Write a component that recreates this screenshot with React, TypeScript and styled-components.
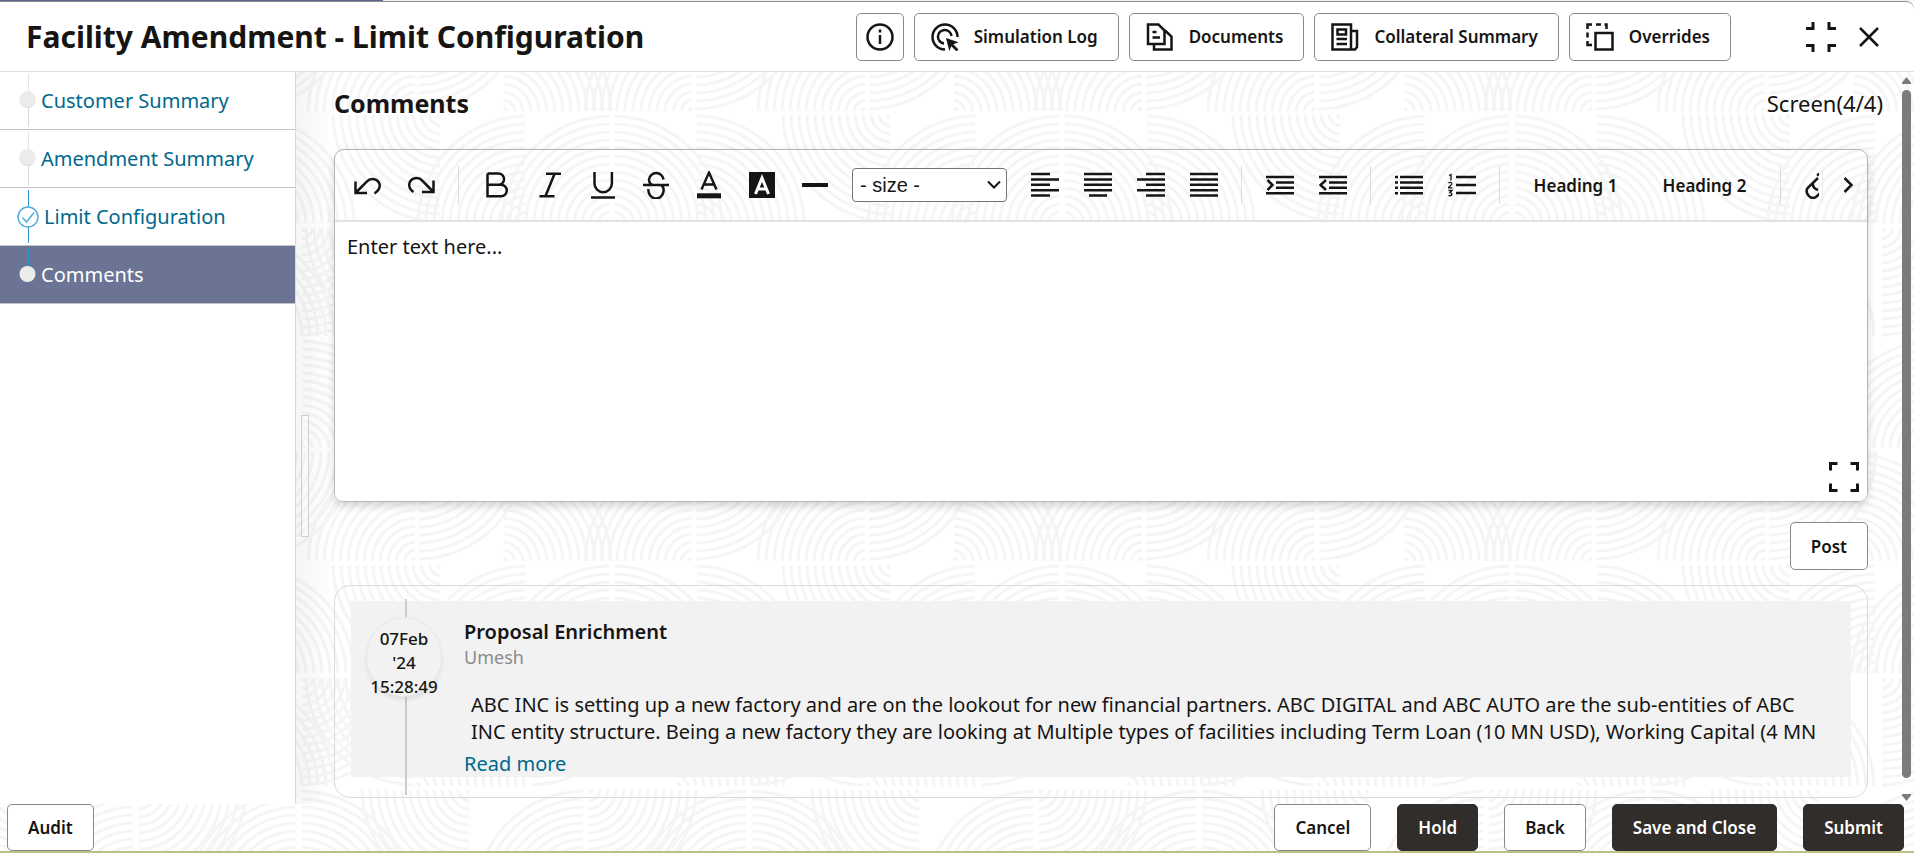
import React from "react";
import styled, { createGlobalStyle, css } from "styled-components";

/* ---------- Background tile: rows of quarter-circle fans ---------- */

type Quarter = "ul" | "ur" | "ll" | "lr";
const TILE = 450;
const FANS: Array<[number, number, Quarter]> = [
  [442, 0, "ll"],
  [77, 112, "ul"],
  [161, 112, "ul"],
  [163, 112, "ur"],
  [245, 112, "ur"],
  [80, 113, "lr"],
  [415, 225, "ur"],
  [415, 113, "ll"],
  [225, 225, "ur"],
  [300, 113, "lr"],
  [135, 337, "ul"],
  [137, 225, "lr"],
  [298, 337, "ul"],
  [300, 337, "ur"],
  [21, 225, "ll"],
  [417, 450, "ul"],
  [417, 337, "lr"],
  [52, 450, "ur"],
  [244, 450, "ul"],
  [244, 337, "lr"],
];

const fanPath = (cx: number, cy: number, q: Quarter) => {
  const sx = q[1] === "l" ? -1 : 1;
  const sy = q[0] === "u" ? -1 : 1;
  const sweep = sx === sy ? 1 : 0;
  let d = "";
  for (let r = 5; r < 112; r += 8) {
    d += `M${cx + sx * r} ${cy + sy * 2}A${r} ${r} 0 0 ${sweep} ${cx + sx * 2} ${cy + sy * r}`;
  }
  return d;
};

const tileSvg = () => {
  const d = FANS.map(([x, y, q]) => [-TILE, 0, TILE].map((dx) => fanPath(x + dx, y, q)).join("")).join("");
  return `<svg xmlns='http://www.w3.org/2000/svg' width='${TILE}' height='${TILE}'><path d='${d}' fill='none' stroke='#f5f5f5' stroke-width='3'/></svg>`;
};
const tileUrl = `url("data:image/svg+xml,${encodeURIComponent(tileSvg()).replace(/'/g, "%27")}")`;

/* ---------- Base ---------- */

const ink = "#161513";
const link = "#00688c";

const GlobalStyle = createGlobalStyle`
  *, *::before, *::after { box-sizing: border-box; }
  body {
    margin: 0;
    color: ${ink};
    background: #fff;
    font-family: "Noto Sans", "Open Sans", sans-serif;
    font-size: 20px;
  }
  h1, h2, h3, p, ol, ul { margin: 0; padding: 0; }
  button, select, textarea { font-family: inherit; color: inherit; }
`;

const Shell = styled.div`
  display: flex;
  flex-direction: column;
  min-height: 100vh;
  background-image: ${tileUrl};
  background-position: 0 113px;
`;

const TopStrip = styled.div`
  height: 1px;
  background: linear-gradient(90deg, #5b6391 0 20%, #f1f1f1 20%);
`;

const Header = styled.header`
  display: flex;
  align-items: center;
  height: 71px;
  padding: 0 31px 0 26px;
  background: #fff;
  border-top: 1px solid #8e8e8e;
  border-bottom: 1px solid #e0e0e0;
  border-top-right-radius: 8px;
`;

const PageTitle = styled.h1`
  flex: 1;
  font-size: 30px;
  line-height: 40px;
  font-weight: 700;
  white-space: nowrap;
`;

const HeaderActions = styled.div`
  display: flex;
  gap: 10px;
  margin-right: 75px;
`;

const boxButton = css`
  display: flex;
  align-items: center;
  justify-content: center;
  height: 48px;
  border: 1px solid #8a8988;
  border-radius: 5px;
  background: #fff;
  font-size: 17px;
  font-weight: 600;
  white-space: nowrap;
  cursor: pointer;
`;

const HeaderButton = styled.button<{ $iconOnly?: boolean }>`
  ${boxButton}
  gap: 15px;
  padding: ${(p) => (p.$iconOnly ? "0 9px" : "0 20px 0 16px")};
`;

const IconButton = styled.button`
  display: flex;
  align-items: center;
  justify-content: center;
  padding: 0;
  border: 0;
  background: none;
  cursor: pointer;
`;

const WindowActions = styled.div`
  display: flex;
  align-items: center;
  gap: 19px;
`;

const Body = styled.div`
  display: flex;
  flex: 1;
`;

/* ---------- Sidebar ---------- */

const Sidebar = styled.nav`
  width: 296px;
  flex: none;
  background: #fff;
  border-right: 1px solid #d3dde6;
`;

const StepList = styled.ol`
  list-style: none;
`;

const Step = styled.li<{ $active?: boolean }>`
  height: 58px;
  border-bottom: 1px solid #c4c4c4;
  background: ${(p) => (p.$active ? "#6b7494" : "#fff")};
`;

const StepLink = styled.a<{ $active?: boolean }>`
  display: flex;
  align-items: center;
  height: 100%;
  padding-left: 16px;
  color: ${(p) => (p.$active ? "#fff" : link)};
  font-size: 20px;
  text-decoration: none;
`;

const Track = styled.svg<{ $wide?: boolean }>`
  flex: none;
  margin-right: ${(p) => (p.$wide ? "4px" : "1px")};
`;

/* ---------- Content ---------- */

const Content = styled.main`
  display: flex;
  flex: 1;
  min-width: 0;
  padding-left: 5px;
  background: linear-gradient(90deg, rgba(0, 0, 0, 0.04), rgba(0, 0, 0, 0) 36px);
`;

const ResizeHandle = styled.div`
  flex: none;
  width: 8px;
  height: 122px;
  margin-top: 343px;
  border: 1px solid #cfcfcf;
  background: rgba(255, 255, 255, 0.3);
`;

const Column = styled.div`
  display: flex;
  flex-direction: column;
  flex: 1;
  min-width: 0;
  padding: 0 31px 6px 25px;
`;

const ColumnHead = styled.div`
  display: flex;
  align-items: center;
  justify-content: space-between;
  height: 77px;
  margin-right: -15px;
  padding-bottom: 16px;
`;

const ScreenCount = styled.span`
  font-size: 22px;
  line-height: 32px;
`;

const SectionTitle = styled.h2`
  font-size: 25px;
  line-height: 32px;
  font-weight: 700;
`;

const Editor = styled.section`
  position: relative;
  border: 1px solid #b5b5b5;
  border-radius: 10px;
  box-shadow: 0 4px 8px rgba(0, 0, 0, 0.16);
`;

const Toolbar = styled.div`
  display: flex;
  align-items: center;
  height: 72px;
  border-bottom: 2px solid #e2e2e2;
`;

const Tools = styled.div`
  display: flex;
  align-items: center;
  flex: 1;
  min-width: 0;
  padding-left: 6px;
  overflow: hidden;
`;

const Tool = styled.button`
  display: flex;
  align-items: center;
  justify-content: center;
  flex: none;
  width: 53px;
  height: 48px;
  padding: 0;
  border: 0;
  background: none;
  cursor: pointer;
`;

const HeadingTool = styled(Tool)`
  width: 129px;
  font-size: 17px;
  font-weight: 600;
`;

const Divider = styled.span`
  flex: none;
  width: 1px;
  height: 38px;
  margin: 0 11px;
  background: #dcdcdc;
`;

const SizeBox = styled.label`
  position: relative;
  display: flex;
  flex: none;
  align-items: center;
  margin: 0 11px;
`;

const SizeSelect = styled.select`
  appearance: none;
  width: 155px;
  height: 34px;
  padding: 0 7px;
  border: 1px solid #767676;
  border-radius: 4px;
  background: #fff;
  font-family: "Liberation Sans", Arial, sans-serif;
  font-size: 20px;
`;

const SelectArrow = styled.svg`
  position: absolute;
  right: 5px;
  pointer-events: none;
`;

const MoreTools = styled(Tool)`
  width: 45px;
  height: 38px;
  margin-left: 3px;
  padding-left: 6px;
  border-left: 1px solid #ececec;
`;

const Input = styled.textarea`
  display: block;
  width: 100%;
  height: 279px;
  padding: 10px 12px;
  border: 0;
  border-radius: 8px;
  background: #fff;
  font-size: 20px;
  line-height: 30px;
  resize: none;
  &::placeholder { color: ${ink}; opacity: 1; }
`;

const Expand = styled(IconButton)`
  position: absolute;
  right: 8px;
  bottom: 9px;
`;

const PostRow = styled.div`
  display: flex;
  justify-content: flex-end;
  padding: 20px 0 15px;
`;

const ActionButton = styled.button<{ $primary?: boolean }>`
  ${boxButton}
  padding: 0 20px;
  ${(p) =>
    p.$primary &&
    css`
      border-color: #312d2a;
      background: #312d2a;
      color: #fff;
    `}
`;

const CommentCard = styled.section`
  flex: 1;
  display: flex;
  padding: 15px 16px 20px;
  border: 1px solid #d3dde6;
  border-radius: 16px;
`;

const Entry = styled.article`
  display: flex;
  align-items: flex-start;
  flex: 1;
  gap: 22px;
  padding: 0 20px 0 15px;
  background: #f2f2f2;
`;

const Timeline = styled.div`
  position: relative;
  flex: none;
  align-self: stretch;
  width: 76px;
  &::before {
    content: "";
    position: absolute;
    top: -2px;
    bottom: -18px;
    left: 39px;
    width: 2px;
    background: #cbcbcb;
  }
`;

const Stamp = styled.time`
  position: relative;
  display: flex;
  flex-direction: column;
  align-items: center;
  justify-content: center;
  height: 80px;
  margin-top: 16px;
  padding-top: 11px;
  border: 1px solid #e8e8e8;
  border-radius: 50%;
  background: #f2f2f2;
  box-shadow: 0 3px 4px rgba(0, 0, 0, 0.08);
  font-size: 17px;
  line-height: 24px;
  font-weight: 500;
`;

const EntryText = styled.div`
  flex: 1;
  min-width: 0;
  padding-top: 17px;
`;

const EntryTitle = styled.h3`
  font-size: 20px;
  line-height: 27px;
  font-weight: 600;
`;

const Author = styled.p`
  color: #8b8b8b;
  font-size: 18px;
  line-height: 24px;
`;

const Message = styled.p`
  padding: 22px 0 5px 7px;
  font-size: 20px;
  line-height: 27px;
`;

const ReadMore = styled.a`
  display: block;
  color: ${link};
  font-size: 20px;
  line-height: 27px;
  text-decoration: none;
`;

const Rail = styled.div`
  display: flex;
  flex-direction: column;
  align-items: center;
  flex: none;
  gap: 6px;
  width: 15px;
  padding: 5px 4px 3px 3px;
`;

const Thumb = styled.div`
  flex: 1;
  width: 9px;
  margin-bottom: 10px;
  border-radius: 5px;
  background: #7b7b7b;
`;

const Footer = styled.footer`
  display: flex;
  align-items: center;
  gap: 26px;
  padding: 0 10px 0 7px;
  border-bottom: 2px solid #bcc087;

  & > button {
    height: 47px;
  }
`;

const FooterSpacer = styled.div`
  flex: 1;
`;

/* ---------- Icons ---------- */

type IconProps = { children: React.ReactNode; size?: number; weight?: number };
const Icon = ({ children, size = 28, weight = 2.5 }: IconProps) => (
  <svg width={size} height={size} viewBox="0 0 28 28" fill="none" stroke={ink} strokeWidth={weight} aria-hidden="true">
    {children}
  </svg>
);

const InfoIcon = () => (
  <Icon>
    <circle cx="14" cy="14" r="12.5" />
    <path d="M14 12v9M14 6.500v3" />
  </Icon>
);
const SimulationIcon = () => (
  <Icon>
    <path d="M14 26.500A12.500 12.500 0 1 1 26.500 14" />
    <path d="M13 20.500A6.800 6.800 0 1 1 20.500 13" />
    <path d="M15 15l12.500 4.300-5.200 2 5.200 5.200-2 2-5.200-5.200-2 4.700z" fill={ink} stroke="none" />
  </Icon>
);
const DocumentsIcon = () => (
  <Icon>
    <path d="M2 1.500h10.500l6 6V21H2zM19 7.500l6.500 6V26.500H8V21M6.500 9h4M6.500 14.500h7.500" />
  </Icon>
);
const CollateralIcon = () => (
  <Icon>
    <path d="M1.500 1.500H20V26.500H1.500zM20 8h6v16l-2 2.500h-4M6.500 6.500h8.500v5H6.500zM5.500 16H16M5.500 21H16" />
  </Icon>
);
const OverridesIcon = () => (
  <Icon>
    <path d="M9.500 10h17v16.500h-17z" />
    <path d="M1.500 6V1.500H6M10 1.500h5M18.500 1.500H20.500V6M1.500 9.500v5M1.500 18v4H6" />
  </Icon>
);
const CollapseIcon = () => (
  <svg width="30" height="30" viewBox="0 0 30 30" fill="none" stroke={ink} strokeWidth="3" aria-hidden="true">
    <path d="M7 0v6.500H0M23 0v6.500h7M7 30v-6.500H0M23 30v-6.500h7" />
  </svg>
);
const ExpandIcon = () => (
  <svg width="30" height="30" viewBox="0 0 30 30" fill="none" stroke={ink} strokeWidth="3" aria-hidden="true">
    <path d="M1.500 8.500v-7h7M21.500 1.500h7v7M1.500 21.500v7h7M21.500 28.500h7v-7" />
  </svg>
);
const CloseIcon = () => (
  <Icon size={28}>
    <path d="M5 5l18 18M23 5L5 23" />
  </Icon>
);

const bars = (rows: Array<[number, number]>, top: number, step: number) =>
  rows.map(([a, b], i) => `M${a} ${top + i * step}H${b}`).join("");

const UndoIcon = () => (
  <Icon>
    <path d="M1.500 10.500V22H13M2 21.500L12.500 10.800C17 6 24 8 25.700 13.500C26.300 17 24 20 20.500 22.500" />
  </Icon>
);
const RedoIcon = () => (
  <Icon>
    <path d="M26.500 9.500V21H15M26 20.500L15.500 9.800C11 5 4 7 2.300 12.500C1.700 16 3 18.500 6.500 21" />
  </Icon>
);
const BoldIcon = () => (
  <Icon>
    <path d="M4.500 2.500H15.500a5.600 5.600 0 0 1 0 11.200H4.500M15.500 13.700h2.500a5.800 5.800 0 0 1 0 11.600H4.500V2.500" />
  </Icon>
);
const ItalicIcon = () => (
  <Icon>
    <path d="M10 2.800H25M3.500 25.200h15M18.500 3L9.500 25" />
  </Icon>
);
const UnderlineIcon = () => (
  <Icon>
    <path d="M5.500 1v11.500a8.700 8.700 0 0 0 17.400 0V1M2 26.500h24" />
  </Icon>
);
const StrikeIcon = () => (
  <Icon>
    <path d="M1 14h26M21.500 8.500a7.300 7.300 0 0 0-14.500 0c0 3 2 5 4 5.500M6.500 18a7.300 8 0 0 0 15 2.500c0.500-3-0.500-5-2-6" />
  </Icon>
);
const TextColorIcon = () => (
  <Icon weight={2.4}>
    <path d="M6.500 18.500L14 1.500l7.500 17M9 13.500h10" />
    <path d="M2 24.800h24" strokeWidth="5" />
  </Icon>
);
const FillColorIcon = () => (
  <Icon weight={3}>
    <rect x="1" y="1" width="26" height="26" fill={ink} stroke="none" />
    <path d="M7.500 23L14 7l6.500 16M9.500 18h9" stroke="#fff" />
  </Icon>
);
const RuleIcon = () => (
  <Icon>
    <path d="M1 14h26" strokeWidth="4" />
  </Icon>
);
const BarsIcon = ({ rows }: { rows: Array<[number, number]> }) => (
  <Icon>
    <path d={bars(rows, 3, 5.4)} />
  </Icon>
);
const IndentIcon = ({ out }: { out?: boolean }) => (
  <Icon>
    <path d={bars([[0, 28], [10, 28], [10, 28], [0, 28]], 6, 5.4)} />
    <path d={out ? "M7 9l-5.500 5L7 19" : "M1.500 9l5 5-5 5"} />
  </Icon>
);
const BulletsIcon = () => (
  <Icon>
    <path d={bars([[5, 28], [5, 28], [5, 28], [5, 28]], 6, 5.4) + bars([[0, 3], [0, 3], [0, 3], [0, 3]], 6, 5.4)} />
  </Icon>
);
const NumbersIcon = () => (
  <Icon>
    <path d={bars([[8, 28], [8, 28], [8, 28]], 6, 8)} />
    <path
      d="M1 4.500l2-1V9.500M0.500 12.200c1-1.500 3.500-1 3.300 0.700-0.300 1.500-3 2.500-3.300 4h4M0.500 19.500h3.500l-2 2.200c3 0 2.500 4-1.500 2.800"
      strokeWidth="1.300"
    />
  </Icon>
);
const LinkIcon = () => (
  <Icon>
    <path d="M13 7L3 16.500C-1 21.500 5.500 29.500 11 26l5-4.500M8 12c-0.500 3.500 2 6 5 7" />
    <path d="M12 4.500l4-3c6-4 13 3 9 8.500l-8 7.500" />
  </Icon>
);
const ChevronIcon = () => (
  <Icon>
    <path d="M10.500 7l7 7-7 7" />
  </Icon>
);

/* ---------- Step markers ---------- */

type Marker = "dot" | "check" | "current";
const StepTrack = ({ kind }: { kind: Marker }) => (
  <Track $wide={kind === "check"} width="24" height="57" viewBox="0 0 24 57" fill="none" aria-hidden="true">
    {kind === "dot" && (
      <>
        <path d="M12.500 36v19" stroke="#d9d9d9" />
        <path d="M12.500 2v18" stroke="#e4e4e4" />
        <circle cx="11.500" cy="28" r="8" fill="#dcdcdc" />
        <circle cx="11.500" cy="27" r="8" fill="#ececec" />
      </>
    )}
    {kind === "check" && (
      <>
        <path d="M12.500 2v17M12.500 39v16" stroke="#2b93cf" />
        <circle cx="12" cy="29" r="10" stroke="#52aee0" strokeWidth="1.500" />
        <path d="M6.500 29.500l4 4.500 7.500-9.500" stroke="#52aee0" strokeWidth="1.500" />
      </>
    )}
    {kind === "current" && (
      <>
        <path d="M12.500 2v18" stroke="#2b93cf" />
        <circle cx="11.500" cy="28" r="8" fill="#ececec" />
      </>
    )}
  </Track>
);

const STEPS: Array<{ label: string; kind: Marker }> = [
  { label: "Customer Summary", kind: "dot" },
  { label: "Amendment Summary", kind: "dot" },
  { label: "Limit Configuration", kind: "check" },
  { label: "Comments", kind: "current" },
];

export default function App() {
  return (
    <>
      <GlobalStyle />
      <Shell>
        <TopStrip />
        <Header>
          <PageTitle>Facility Amendment - Limit Configuration</PageTitle>
          <HeaderActions>
            <HeaderButton type="button" $iconOnly aria-label="Information"><InfoIcon /></HeaderButton>
            <HeaderButton type="button"><SimulationIcon />Simulation Log</HeaderButton>
            <HeaderButton type="button"><DocumentsIcon />Documents</HeaderButton>
            <HeaderButton type="button"><CollateralIcon />Collateral Summary</HeaderButton>
            <HeaderButton type="button"><OverridesIcon />Overrides</HeaderButton>
          </HeaderActions>
          <WindowActions>
            <IconButton type="button" aria-label="Collapse"><CollapseIcon /></IconButton>
            <IconButton type="button" aria-label="Close"><CloseIcon /></IconButton>
          </WindowActions>
        </Header>

        <Body>
          <Sidebar aria-label="Steps">
            <StepList>
              {STEPS.map(({ label, kind }) => (
                <Step key={label} $active={kind === "current"}>
                  <StepLink href="#" $active={kind === "current"} aria-current={kind === "current" ? "step" : undefined}>
                    <StepTrack kind={kind} />
                    {label}
                  </StepLink>
                </Step>
              ))}
            </StepList>
          </Sidebar>

          <Content>
            <ResizeHandle />
            <Column>
              <ColumnHead>
                <SectionTitle>Comments</SectionTitle>
                <ScreenCount>Screen(4/4)</ScreenCount>
              </ColumnHead>

              <Editor aria-label="Comment editor">
                <Toolbar>
                  <Tools>
                    <Tool type="button" aria-label="Undo"><UndoIcon /></Tool>
                    <Tool type="button" aria-label="Redo"><RedoIcon /></Tool>
                    <Divider />
                    <Tool type="button" aria-label="Bold"><BoldIcon /></Tool>
                    <Tool type="button" aria-label="Italic"><ItalicIcon /></Tool>
                    <Tool type="button" aria-label="Underline"><UnderlineIcon /></Tool>
                    <Tool type="button" aria-label="Strikethrough"><StrikeIcon /></Tool>
                    <Tool type="button" aria-label="Text colour"><TextColorIcon /></Tool>
                    <Tool type="button" aria-label="Fill colour"><FillColorIcon /></Tool>
                    <Tool type="button" aria-label="Horizontal rule"><RuleIcon /></Tool>
                    <SizeBox>
                      <SizeSelect aria-label="Font size" defaultValue="">
                        <option value="">- size -</option>
                      </SizeSelect>
                      <SelectArrow width="16" height="16" viewBox="0 0 16 16" fill="none" stroke={ink} strokeWidth="2">
                        <path d="M2 4.500l6 6 6-6" />
                      </SelectArrow>
                    </SizeBox>
                    <Tool type="button" aria-label="Align left">
                      <BarsIcon rows={[[0, 19], [0, 28], [0, 19], [0, 28], [0, 19]]} />
                    </Tool>
                    <Tool type="button" aria-label="Align centre">
                      <BarsIcon rows={[[0, 28], [0, 28], [0, 28], [0, 28], [5, 23]]} />
                    </Tool>
                    <Tool type="button" aria-label="Align right">
                      <BarsIcon rows={[[9, 28], [0, 28], [9, 28], [0, 28], [9, 28]]} />
                    </Tool>
                    <Tool type="button" aria-label="Justify">
                      <BarsIcon rows={[[0, 28], [0, 28], [0, 28], [0, 28], [0, 28]]} />
                    </Tool>
                    <Divider />
                    <Tool type="button" aria-label="Indent"><IndentIcon /></Tool>
                    <Tool type="button" aria-label="Outdent"><IndentIcon out /></Tool>
                    <Divider />
                    <Tool type="button" aria-label="Bulleted list"><BulletsIcon /></Tool>
                    <Tool type="button" aria-label="Numbered list"><NumbersIcon /></Tool>
                    <Divider />
                    <HeadingTool type="button">Heading 1</HeadingTool>
                    <HeadingTool type="button">Heading 2</HeadingTool>
                    <Divider />
                    <Tool type="button" aria-label="Link"><LinkIcon /></Tool>
                  </Tools>
                  <MoreTools type="button" aria-label="More tools"><ChevronIcon /></MoreTools>
                </Toolbar>
                <Input aria-label="Comment" placeholder="Enter text here..." />
                <Expand type="button" aria-label="Expand editor"><ExpandIcon /></Expand>
              </Editor>

              <PostRow>
                <ActionButton type="button">Post</ActionButton>
              </PostRow>

              <CommentCard>
                <Entry>
                  <Timeline>
                    <Stamp dateTime="2024-02-07T15:28:49">
                      <span>07Feb</span>
                      <span>'24</span>
                      <span>15:28:49</span>
                    </Stamp>
                  </Timeline>
                  <EntryText>
                    <EntryTitle>Proposal Enrichment</EntryTitle>
                    <Author>Umesh</Author>
                    <Message>
                      ABC INC is setting up a new factory and are on the lookout for new financial partners. ABC
                      DIGITAL and ABC AUTO are the sub-entities of ABC INC entity structure. Being a new factory they
                      are looking at Multiple types of facilities including Term Loan (10 MN USD), Working Capital (4 MN
                    </Message>
                    <ReadMore href="#">Read more</ReadMore>
                  </EntryText>
                </Entry>
              </CommentCard>
            </Column>
            <Rail aria-hidden="true">
              <svg width="9" height="7" viewBox="0 0 9 7"><path d="M4.500 0L9 5.500V7H0V5.500z" fill="#7b7b7b" /></svg>
              <Thumb />
              <svg width="9" height="7" viewBox="0 0 9 7"><path d="M4.500 7L9 1.500V0H0V1.500z" fill="#7b7b7b" /></svg>
            </Rail>
          </Content>
        </Body>

        <Footer>
          <ActionButton type="button">Audit</ActionButton>
          <FooterSpacer />
          <ActionButton type="button">Cancel</ActionButton>
          <ActionButton type="button" $primary>Hold</ActionButton>
          <ActionButton type="button">Back</ActionButton>
          <ActionButton type="button" $primary>Save and Close</ActionButton>
          <ActionButton type="button" $primary>Submit</ActionButton>
        </Footer>
      </Shell>
    </>
  );
}
